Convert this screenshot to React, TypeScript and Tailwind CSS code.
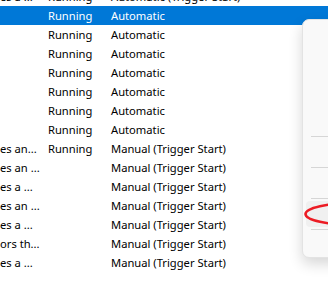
import React from "react";

type Row = { desc: string; status: string; startup: string };

const rows: Row[] = [
  { desc: "es a ...", status: "Running", startup: "Automatic (Trigger Start)" },
  { desc: "", status: "Running", startup: "Automatic" },
  { desc: "", status: "Running", startup: "Automatic" },
  { desc: "", status: "Running", startup: "Automatic" },
  { desc: "", status: "Running", startup: "Automatic" },
  { desc: "", status: "Running", startup: "Automatic" },
  { desc: "", status: "Running", startup: "Automatic" },
  { desc: "", status: "Running", startup: "Automatic" },
  { desc: "es an...", status: "Running", startup: "Manual (Trigger Start)" },
  { desc: "es an ...", status: "", startup: "Manual (Trigger Start)" },
  { desc: "es a ...", status: "", startup: "Manual (Trigger Start)" },
  { desc: "es an ...", status: "", startup: "Manual (Trigger Start)" },
  { desc: "es a ...", status: "", startup: "Manual (Trigger Start)" },
  { desc: "ors th...", status: "", startup: "Manual (Trigger Start)" },
  { desc: "es a ...", status: "", startup: "Manual (Trigger Start)" },
];

export default function App() {
  return (
    <div
      className="relative w-[328px] h-[288px] overflow-hidden bg-white text-black"
      style={{ fontFamily: '"Noto Sans", sans-serif' }}
    >
      <div className="flex flex-col -mt-[13px] text-[11.2px]">
        {rows.map((r, i) => (
          <div
            key={i}
            className={
              "flex h-[19px] leading-[19px] whitespace-nowrap " +
              (i === 1 ? "bg-[#0078d7] text-white" : "")
            }
          >
            <div className="w-[48px] shrink-0 overflow-hidden">{r.desc}</div>
            <div className="w-[63px] shrink-0">{r.status}</div>
            <div className="flex-1">{r.startup}</div>
          </div>
        ))}
      </div>

      <div className="absolute left-[302px] top-[19px] w-[60px] h-[239px] rounded-[7px] border border-[#e3e3e3] bg-[#f9f9f9] shadow-[0_6px_14px_rgba(0,0,0,0.16)] flex flex-col">
        <div className="h-[116px]" />
        <div className="ml-[8px] h-px bg-[#d6d6d6]" />
        <div className="h-[30px]" />
        <div className="ml-[8px] h-px bg-[#d6d6d6]" />
        <div className="h-[30px]" />
        <div className="ml-[8px] h-px bg-[#d6d6d6]" />
        <div className="h-[30px] py-[2px] pl-[3px]">
          <div className="h-full rounded-[4px] bg-[#f0f0f0]" />
        </div>
        <div className="ml-[8px] h-px bg-[#d6d6d6]" />
      </div>

      <svg
        className="absolute left-[300px] top-[198px]"
        width="28"
        height="32"
        viewBox="0 0 28 32"
      >
        <ellipse
          cx="55"
          cy="16"
          rx="49.5"
          ry="11"
          fill="none"
          stroke="#ec1c24"
          strokeWidth="2.6"
        />
      </svg>
    </div>
  );
}
